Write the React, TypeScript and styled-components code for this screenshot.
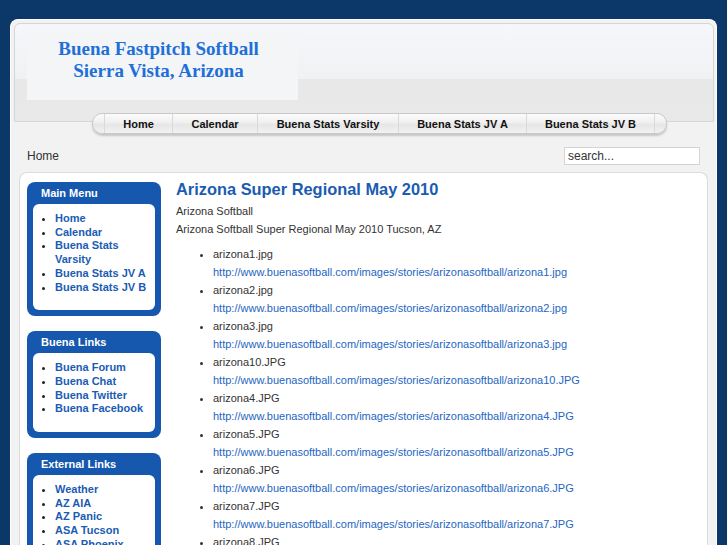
import React from 'react';
import styled, { createGlobalStyle } from 'styled-components';

const GlobalStyle = createGlobalStyle`
    html, body {
        margin: 0;
        padding: 0;
        background: #0b3869;
    }
    body {
        font-family: 'Liberation Sans', Arial, sans-serif;
        color: #333;
    }
`;

const Page = styled.div`
    padding: 19px 10px 0 10px;
`;

const Shell = styled.div`
    background: #f2f2f2;
    border: 1px solid #ffffff;
    border-bottom: none;
    border-radius: 8px 8px 0 0;
    padding: 3px 2px 0 3px;
`;

const Header = styled.div`
    height: 99px;
    border: 1px solid #d6d6d6;
    border-radius: 6px 6px 0 0;
    background: linear-gradient(to bottom, #f5f7fa 0%, #eff1f3 57%, #e8e8e8 57%, #e9e9e9 100%);
    padding: 8px 0 0 12px;
    box-sizing: border-box;
`;

const LogoBox = styled.div`
    width: 271px;
    height: 68px;
    background: #f4f5f7;
    display: flex;
    flex-direction: column;
    align-items: center;
    padding: 6px 8px 0 0;
    box-sizing: border-box;
    font-family: 'Liberation Serif', 'Times New Roman', serif;
    font-weight: bold;
    font-size: 19px;
    line-height: 22px;
    color: #1f6fd8;
`;

const NavRow = styled.div`
    display: flex;
    margin-top: -9px;
    padding-left: 78px;
`;

const Nav = styled.ul`
    display: flex;
    list-style: none;
    margin: 0;
    padding: 0 11px;
    height: 19px;
    border: 1px solid #c9c9c9;
    border-radius: 10px;
    background: linear-gradient(to bottom, #fbfbfb 0%, #f0f0f0 45%, #e6e6e6 55%, #f2f2f2 100%);
    box-shadow: 0 2px 2px rgba(0, 0, 0, 0.18);
`;

const NavItem = styled.li<{ width: number }>`
    width: ${(p) => p.width}px;
    display: flex;
    align-items: center;
    justify-content: center;
    border-left: 1px solid #d9d9d9;
    font-size: 11px;
    font-weight: bold;
    color: #111;
    &:last-child {
        border-right: 1px solid #d9d9d9;
    }
`;

const Bar = styled.div`
    display: flex;
    justify-content: space-between;
    align-items: center;
    padding: 13px 14px 0 13px;
    font-size: 12px;
    color: #333;
`;

const Search = styled.input`
    width: 136px;
    height: 18px;
    box-sizing: border-box;
    border: 1px solid #d4d4d4;
    background: #fff;
    font-family: 'Liberation Sans', Arial, sans-serif;
    font-size: 12px;
    color: #333;
    padding: 0 3px;
    outline: none;
`;

const ContentBox = styled.div`
    margin: 7px 6px 0 5px;
    background: #fff;
    border: 1px solid #dcdcdc;
    border-bottom: none;
    border-radius: 8px 8px 0 0;
    padding: 9px 8px 0 7px;
    display: flex;
    gap: 15px;
    min-height: 400px;
`;

const Sidebar = styled.div`
    width: 134px;
    flex-shrink: 0;
    display: flex;
    flex-direction: column;
    gap: 15px;
`;

const Module = styled.div`
    background: #1558ad;
    border-radius: 8px;
    padding: 0 6px 6px 6px;
`;

const ModuleTitle = styled.h3`
    margin: 0;
    height: 22px;
    line-height: 23px;
    padding-left: 8px;
    font-size: 11px;
    font-weight: bold;
    color: #fff;
`;

const ModuleBody = styled.div`
    background: #fff;
    border-radius: 6px;
    padding: 8px 4px 16px 4px;
`;

const MenuList = styled.ul`
    margin: 0;
    padding: 0 0 0 18px;
    font-size: 11px;
    line-height: 13.7px;
    color: #222;
`;

const MenuLink = styled.a`
    color: #1a5cb4;
    font-weight: bold;
    text-decoration: none;
`;

const Main = styled.div`
    flex: 1;
    font-size: 11px;
    line-height: 18px;
    color: #333;
`;

const Title = styled.h2`
    margin: -2px 0 4px 0;
    font-size: 16.4px;
    line-height: 18px;
    font-weight: bold;
    color: #1b5cb0;
`;

const Para = styled.p`
    margin: 0;
`;

const Files = styled.ul`
    margin: 7px 0 0 0;
    padding: 0 0 0 37px;
`;

const FileLink = styled.a`
    display: block;
    color: #2566c2;
    text-decoration: none;
`;

const navItems = [
    { label: 'Home', width: 67 },
    { label: 'Calendar', width: 84 },
    { label: 'Buena Stats Varsity', width: 140 },
    { label: 'Buena Stats JV A', width: 127 },
    { label: 'Buena Stats JV B', width: 127 },
];

const modules = [
    { title: 'Main Menu', items: ['Home', 'Calendar', 'Buena Stats Varsity', 'Buena Stats JV A', 'Buena Stats JV B'] },
    { title: 'Buena Links', items: ['Buena Forum', 'Buena Chat', 'Buena Twitter', 'Buena Facebook'] },
    { title: 'External Links', items: ['Weather', 'AZ AIA', 'AZ Panic', 'ASA Tucson', 'ASA Phoenix', 'ASA National'] },
];

const files = [
    'arizona1.jpg',
    'arizona2.jpg',
    'arizona3.jpg',
    'arizona10.JPG',
    'arizona4.JPG',
    'arizona5.JPG',
    'arizona6.JPG',
    'arizona7.JPG',
    'arizona8.JPG',
    'arizona9.JPG',
];

const BASE = 'http://www.buenasoftball.com/images/stories/arizonasoftball/';

export default function App() {
    return (
        <Page>
            <GlobalStyle />
            <Shell>
                <Header>
                    <LogoBox>
                        <div>Buena Fastpitch Softball</div>
                        <div>Sierra Vista, Arizona</div>
                    </LogoBox>
                </Header>
                <NavRow>
                    <Nav>
                        {navItems.map((item) => (
                            <NavItem key={item.label} width={item.width}>
                                {item.label}
                            </NavItem>
                        ))}
                    </Nav>
                </NavRow>
                <Bar>
                    <span>Home</span>
                    <Search defaultValue="search..." />
                </Bar>
                <ContentBox>
                    <Sidebar>
                        {modules.map((mod) => (
                            <Module key={mod.title}>
                                <ModuleTitle>{mod.title}</ModuleTitle>
                                <ModuleBody>
                                    <MenuList>
                                        {mod.items.map((item) => (
                                            <li key={item}>
                                                <MenuLink href="#">{item}</MenuLink>
                                            </li>
                                        ))}
                                    </MenuList>
                                </ModuleBody>
                            </Module>
                        ))}
                    </Sidebar>
                    <Main>
                        <Title>Arizona Super Regional May 2010</Title>
                        <Para>Arizona Softball</Para>
                        <Para>Arizona Softball Super Regional May 2010 Tucson, AZ</Para>
                        <Files>
                            {files.map((f) => (
                                <li key={f}>
                                    {f}
                                    <FileLink href="#">{BASE + f}</FileLink>
                                </li>
                            ))}
                        </Files>
                    </Main>
                </ContentBox>
            </Shell>
        </Page>
    );
}
